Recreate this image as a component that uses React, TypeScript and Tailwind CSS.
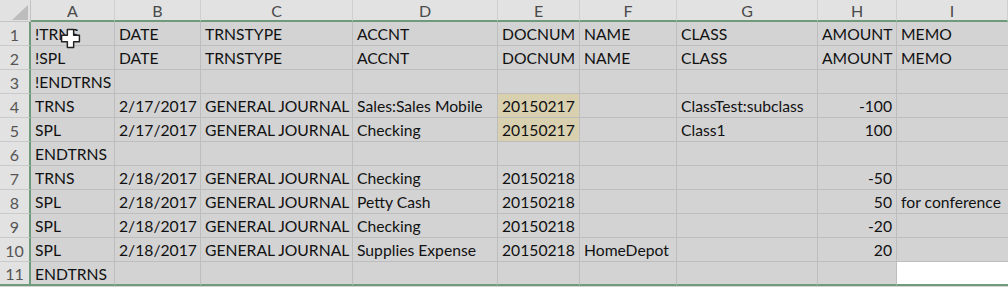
const cols = ['A', 'B', 'C', 'D', 'E', 'F', 'G', 'H', 'I'];

type Cell = { v: string; right?: boolean; tan?: boolean; white?: boolean };

const rows: Cell[][] = [
  [{ v: '!TRNS' }, { v: 'DATE' }, { v: 'TRNSTYPE' }, { v: 'ACCNT' }, { v: 'DOCNUM' }, { v: 'NAME' }, { v: 'CLASS' }, { v: 'AMOUNT' }, { v: 'MEMO' }],
  [{ v: '!SPL' }, { v: 'DATE' }, { v: 'TRNSTYPE' }, { v: 'ACCNT' }, { v: 'DOCNUM' }, { v: 'NAME' }, { v: 'CLASS' }, { v: 'AMOUNT' }, { v: 'MEMO' }],
  [{ v: '!ENDTRNS' }, { v: '' }, { v: '' }, { v: '' }, { v: '' }, { v: '' }, { v: '' }, { v: '' }, { v: '' }],
  [{ v: 'TRNS' }, { v: '2/17/2017' }, { v: 'GENERAL JOURNAL' }, { v: 'Sales:Sales Mobile' }, { v: '20150217', tan: true }, { v: '' }, { v: 'ClassTest:subclass' }, { v: '-100', right: true }, { v: '' }],
  [{ v: 'SPL' }, { v: '2/17/2017' }, { v: 'GENERAL JOURNAL' }, { v: 'Checking' }, { v: '20150217', tan: true }, { v: '' }, { v: 'Class1' }, { v: '100', right: true }, { v: '' }],
  [{ v: 'ENDTRNS' }, { v: '' }, { v: '' }, { v: '' }, { v: '' }, { v: '' }, { v: '' }, { v: '' }, { v: '' }],
  [{ v: 'TRNS' }, { v: '2/18/2017' }, { v: 'GENERAL JOURNAL' }, { v: 'Checking' }, { v: '20150218' }, { v: '' }, { v: '' }, { v: '-50', right: true }, { v: '' }],
  [{ v: 'SPL' }, { v: '2/18/2017' }, { v: 'GENERAL JOURNAL' }, { v: 'Petty Cash' }, { v: '20150218' }, { v: '' }, { v: '' }, { v: '50', right: true }, { v: 'for conference' }],
  [{ v: 'SPL' }, { v: '2/18/2017' }, { v: 'GENERAL JOURNAL' }, { v: 'Checking' }, { v: '20150218' }, { v: '' }, { v: '' }, { v: '-20', right: true }, { v: '' }],
  [{ v: 'SPL' }, { v: '2/18/2017' }, { v: 'GENERAL JOURNAL' }, { v: 'Supplies Expense' }, { v: '20150218' }, { v: 'HomeDepot' }, { v: '' }, { v: '20', right: true }, { v: '' }],
  [{ v: 'ENDTRNS' }, { v: '' }, { v: '' }, { v: '' }, { v: '' }, { v: '' }, { v: '' }, { v: '' }, { v: '', white: true }],
];

function Cursor() {
  return (
    <svg className="absolute left-[60px] top-[28px]" width="21" height="21" viewBox="0 0 20 20">
      <path
        d="M7 1.5h6v5.5h5.5v6H13v5.5H7V13H1.5V7H7z"
        fill="#ffffff"
        stroke="#222222"
        strokeWidth="1.4"
        strokeLinejoin="round"
      />
    </svg>
  );
}

export default function App() {
  return (
    <div className="relative w-[1008px] h-[287px] overflow-hidden bg-[#d3d3d3] font-['Lato','Open_Sans',sans-serif] text-[15.7px] text-[#111]">
      <div className="grid grid-cols-[31px_84px_86px_152px_145px_82px_97px_141px_79px_111px] grid-rows-[22px_repeat(11,24px)]">
        {/* corner */}
        <div className="relative bg-[#e2e2e2] border-r border-b border-[#c4c4c4]">
          <svg className="absolute left-0 top-0" width="31" height="22" viewBox="0 0 31 22">
            <polygon points="28,5 28,20 12,20" fill="#bdbdbd" />
          </svg>
        </div>
        {cols.map((c) => (
          <div
            key={c}
            className="flex items-center justify-center bg-[#e2e2e2] border-r border-[#cfcfcf] border-b-2 border-b-[#6f9a7c] text-[#4a4a4a] text-[16px] pt-[2px]"
          >
            {c}
          </div>
        ))}
        {rows.map((row, ri) => (
          <>
            <div
              key={`h${ri}`}
              className={`flex items-center justify-center bg-[#e2e2e2] border-r-2 border-r-[#6f9a7c] border-b border-[#cacaca] text-[#555] text-[16px] pt-[2px] ${
                ri === rows.length - 1 ? 'border-b-2 border-b-[#6f9a7c]' : ''
              }`}
            >
              {ri + 1}
            </div>
            {row.map((cell, ci) => (
              <div
                key={`${ri}-${ci}`}
                className={`flex items-center whitespace-nowrap overflow-visible border-r border-b border-[#bdbdbd] px-[4px] pt-[3px] ${
                  cell.right ? 'justify-end' : 'justify-start'
                } ${cell.tan ? 'bg-[#d9d0b0]' : cell.white ? 'bg-white' : 'bg-[#d3d3d3]'} ${
                  ri === rows.length - 1 ? 'border-b-2 border-b-[#6f9a7c]' : ''
                } ${ci === 8 ? 'border-r-0' : ''}`}
              >
                {cell.v}
              </div>
            ))}
          </>
        ))}
      </div>
      <Cursor />
    </div>
  );
}
